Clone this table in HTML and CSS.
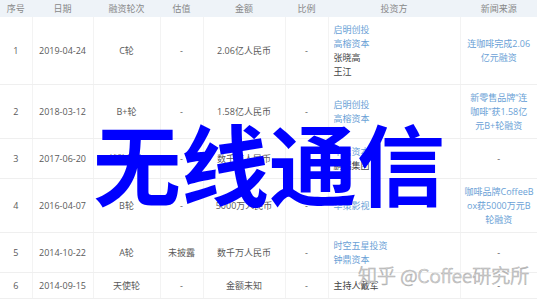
FILE: index.html
```html
<!DOCTYPE html>
<html lang="zh-CN">
<head>
<meta charset="utf-8">
<link rel="stylesheet" href="styles.css">
</head>
<body>
<div class="page">
  <table class="fin">
    <colgroup>
      <col class="c1"><col class="c2"><col class="c3"><col class="c4"><col class="c5"><col class="c6"><col class="c7"><col class="c8">
    </colgroup>
    <thead>
      <tr><th>序号</th><th>日期</th><th>融资轮次</th><th>估值</th><th>金额</th><th>比例</th><th>投资方</th><th>新闻来源</th></tr>
    </thead>
    <tbody>
      <tr class="r1">
        <td>1</td><td>2019-04-24</td><td>C轮</td><td>-</td><td>2.06亿人民币</td><td>-</td>
        <td class="left"><span class="link">启明创投</span><br><span class="link">高榕资本</span><br>张晓高<br>王江</td>
        <td class="link">连咖啡完成2.06<br>亿元融资</td>
      </tr>
      <tr class="r2">
        <td>2</td><td>2018-03-12</td><td>B+轮</td><td>-</td><td>1.58亿人民币</td><td>-</td>
        <td class="left"><span class="link">启明创投</span><br><span class="link">高榕资本</span></td>
        <td class="link">新零售品牌“连<br>咖啡”获1.58亿<br>元B+轮融资</td>
      </tr>
      <tr class="r3">
        <td>3</td><td>2017-06-20</td><td>战略投资</td><td>-</td><td>数千万人民币</td><td>-</td>
        <td class="left"><span class="link">中信资本</span><br>鹏瑞集团</td>
        <td>-</td>
      </tr>
      <tr class="r4">
        <td>4</td><td>2016-04-07</td><td>B轮</td><td>-</td><td>5000万人民币</td><td>-</td>
        <td class="left"><span class="link">华策影视</span></td>
        <td class="link">咖啡品牌CoffeeB<br>ox获5000万元B<br>轮融资</td>
      </tr>
      <tr class="r5">
        <td>5</td><td>2014-10-22</td><td>A轮</td><td>未披露</td><td>数千万人民币</td><td>-</td>
        <td class="left"><span class="link">时空五星投资</span><br><span class="link">钟鼎资本</span></td>
        <td>-</td>
      </tr>
      <tr class="r6">
        <td>6</td><td>2014-09-15</td><td>天使轮</td><td>-</td><td>金额未知</td><td>-</td>
        <td class="left">主持人戴军</td>
        <td>-</td>
      </tr>
    </tbody>
  </table>
  <div class="overlay">无线通信</div>
  <div class="watermark">知乎 @Coffee研究所</div>
</div>
</body>
</html>
```

FILE: styles.css
```css
html, body {
  margin: 0;
  padding: 0;
  background: #ffffff;
}
.page {
  position: relative;
  width: 537px;
  height: 300px;
  overflow: hidden;
  font-family: "Open Sans", "Noto Sans CJK SC", sans-serif;
  font-size: 9px;
  color: #5a5a5a;
}
.fin {
  width: 537px;
  border-collapse: collapse;
  table-layout: fixed;
}
.c1 { width: 32px; }
.c2 { width: 61px; }
.c3 { width: 67px; }
.c4 { width: 43px; }
.c5 { width: 82px; }
.c6 { width: 43px; }
.c7 { width: 132px; }
.c8 { width: 77px; }
.fin th {
  height: 17px;
  padding: 0 4px;
  background: #eef3f8;
  color: #888;
  font-weight: normal;
  text-align: center;
  line-height: 14px;
  border-left: 1px solid #eef3f8;
}
.fin td {
  padding: 6px 4px 5px;
  line-height: 14px;
  text-align: center;
  vertical-align: middle;
  border-bottom: 1px solid #efefef;
  border-left: 1px solid #f3f3f3;
  white-space: nowrap;
}
.fin th:first-child, .fin td:first-child { border-left: none; }
.fin td.left { text-align: left; padding-left: 5px; color: #444; }
.link, .fin td.link { color: #6a9fd6; }
.overlay {
  position: absolute;
  left: 93px;
  top: 117px;
  font-family: "Noto Sans CJK SC", sans-serif;
  font-weight: bold;
  font-size: 88px;
  line-height: 88px;
  color: #0000ff;
  white-space: nowrap;
}
.watermark {
  position: absolute;
  left: 358px;
  top: 263px;
  font-family: "Noto Sans CJK SC", sans-serif;
  font-size: 19px;
  line-height: 24px;
  font-weight: 300;
  color: rgba(255, 255, 255, 0.7);
  -webkit-text-stroke: 0.7px #b4b4b4;
  white-space: nowrap;
}
```
